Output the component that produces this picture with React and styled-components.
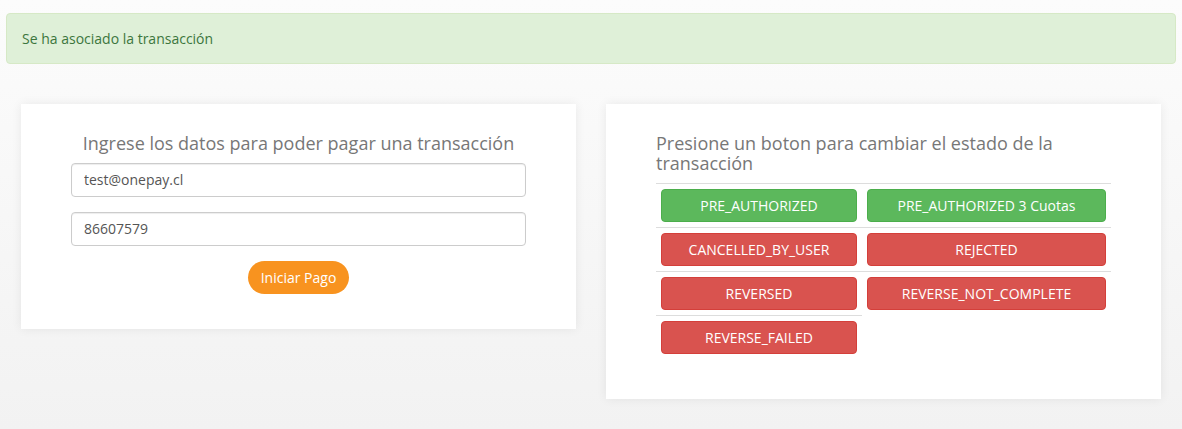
import React, { useState } from 'react';
import styled, { createGlobalStyle } from 'styled-components';

const GlobalStyle = createGlobalStyle`
  html, body {
    margin: 0;
    min-height: 100%;
  }
  body {
    font-family: 'Open Sans', 'Noto Sans', sans-serif;
    font-size: 14px;
    line-height: 1.42857;
    color: #333;
    background: linear-gradient(#fcfcfc, #f2f2f2);
    min-height: 429px;
  }
  * {
    box-sizing: border-box;
  }
`;

const states = [
  ['PRE_AUTHORIZED', 'success'],
  ['PRE_AUTHORIZED 3 Cuotas', 'success'],
  ['CANCELLED_BY_USER', 'danger'],
  ['REJECTED', 'danger'],
  ['REVERSED', 'danger'],
  ['REVERSE_NOT_COMPLETE', 'danger'],
  ['REVERSE_FAILED', 'danger'],
];

const App = () => {
  const [email, setEmail] = useState('test@onepay.cl');
  const [phone, setPhone] = useState('86607579');

  const rows = [];
  for (let i = 0; i < states.length; i += 2) {
    rows.push(states.slice(i, i + 2));
  }

  return (
    <>
      <GlobalStyle />
      <Alert>Se ha asociado la transacción</Alert>
      <Main>
        <Card>
          <Title center>Ingrese los datos para poder pagar una transacción</Title>
          <form onSubmit={(e) => e.preventDefault()}>
            <Input
              type='email'
              value={email}
              onChange={(e) => setEmail(e.target.value)}
            />
            <Input
              type='text'
              value={phone}
              onChange={(e) => setPhone(e.target.value)}
            />
            <Center>
              <PayButton type='submit'>Iniciar Pago</PayButton>
            </Center>
          </form>
        </Card>
        <Card>
          <Title>Presione un boton para cambiar el estado de la transacción</Title>
          <Table>
            <colgroup>
              <col style={{ width: '206px' }} />
              <col />
            </colgroup>
            <tbody>
              {rows.map((row, index) => (
                <tr key={index}>
                  {row.map(([label, kind]) => (
                    <Cell key={label}>
                      <StateButton kind={kind}>{label}</StateButton>
                    </Cell>
                  ))}
                </tr>
              ))}
            </tbody>
          </Table>
        </Card>
      </Main>
    </>
  );
};

export default App;

const Alert = styled.div`
  margin: 13px 6px 0;
  padding: 15px 15px 14px;
  line-height: 20px;
  background: #dff0d8;
  border: 1px solid #d6e9c6;
  border-radius: 4px;
  color: #3c763d;
`;

const Main = styled.div`
  display: grid;
  grid-template-columns: 1fr 1fr;
  gap: 30px;
  align-items: start;
  padding: 40px 21px 0;
`;

const Card = styled.div`
  background: #fff;
  padding: 20px 50px;
  box-shadow: 0 0 10px rgba(0, 0, 0, 0.07);
`;

const Title = styled.h4`
  margin: 10px 0 9px;
  font-size: 18px;
  font-weight: 400;
  line-height: 1.1;
  color: #777;
  text-align: ${(p) => (p.center ? 'center' : 'left')};
`;

const Input = styled.input`
  display: block;
  width: 100%;
  height: 34px;
  padding: 6px 12px;
  margin-bottom: 15px;
  font-family: inherit;
  font-size: 14px;
  color: #555;
  background: #fff;
  border: 1px solid #ccc;
  border-radius: 4px;
  box-shadow: inset 0 1px 1px rgba(0, 0, 0, 0.075);
  outline: none;
`;

const Center = styled.div`
  display: flex;
  justify-content: center;
  margin-bottom: 15px;
`;

const PayButton = styled.button`
  height: 33px;
  padding: 0 13px;
  font-family: inherit;
  font-size: 14px;
  color: #fff;
  background: #f8931f;
  border: none;
  border-radius: 17px;
  cursor: pointer;
`;

const Table = styled.table`
  width: 100%;
  border-collapse: collapse;
  border-spacing: 0;
  margin-bottom: 20px;
  table-layout: fixed;
`;

const Cell = styled.td`
  padding: 5px;
  border-top: 1px solid #ddd;
`;

const StateButton = styled.button`
  display: block;
  width: 100%;
  height: 33px;
  padding: 6px 12px;
  font-family: inherit;
  font-size: 14px;
  line-height: 19px;
  color: #fff;
  background: ${(p) => (p.kind === 'success' ? '#5cb85c' : '#d9534f')};
  border: 1px solid ${(p) => (p.kind === 'success' ? '#4cae4c' : '#d43f3a')};
  border-radius: 4px;
  cursor: pointer;
`;
